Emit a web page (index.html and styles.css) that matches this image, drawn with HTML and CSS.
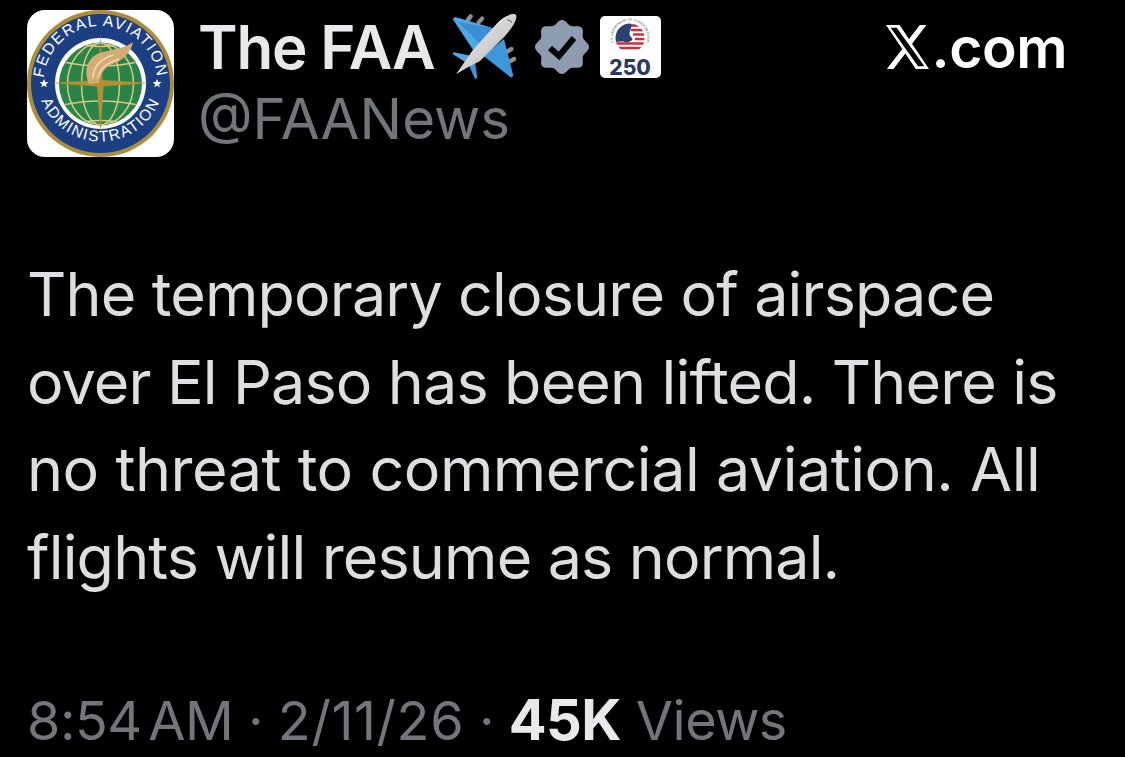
FILE: index.html
```html
<!DOCTYPE html>
<html lang="en">
<head>
<meta charset="utf-8">
<title>The FAA</title>
<link rel="stylesheet" href="styles.css">
</head>
<body>
<main class="post">
  <header class="head">
    <div class="avatar">
      <svg viewBox="0 0 147 147" width="147" height="147">
        <defs>
          <path id="arcTop" d="M18 86 A57 57 0 1 1 129 86"/>
          <path id="arcBot" d="M10 68 A63.5 63.5 0 0 0 137 68"/>
          <clipPath id="globe"><circle cx="73.5" cy="74" r="41"/></clipPath>
        </defs>
        <circle cx="73.5" cy="73.5" r="73.5" fill="#ad8c3a"/>
        <circle cx="73.5" cy="73.5" r="69.5" fill="#1b3f82"/>
        <circle cx="73.5" cy="73.5" r="45.5" fill="#fff"/>
        <circle cx="73.5" cy="74" r="41.5" fill="#2a8448"/>
        <g clip-path="url(#globe)" fill="none" stroke="#d5cc86" stroke-width="1.5">
          <ellipse cx="73.5" cy="74" rx="19" ry="41"/>
          <ellipse cx="73.5" cy="74" rx="33" ry="41"/>
          <path d="M32 51Q73.5 61 115 51M32 96Q73.5 86 115 96M40 31Q73.5 42 107 31M40 116Q73.5 105 107 116"/>
        </g>
        <path d="M73.5 23L75.5 70L123 73L76.5 76.5L73.5 124L70 76.5L24 73L71.5 70Z" fill="#b38f38"/>
        <path d="M62 74C56 60 60 46 76 42C88 39 98 38 106 32C104 43 95 51 86 54C77 57 73 65 72 73Z" fill="#d3ad72"/>
        <path d="M66 68C66 56 74 49 86 45M71 68C73 58 80 53 92 49" fill="none" stroke="#f0dcb8" stroke-width="1.5"/>
        <text class="seal-text"><textPath href="#arcTop" startOffset="50%" text-anchor="middle">FEDERAL AVIATION</textPath></text>
        <text class="seal-text"><textPath href="#arcBot" startOffset="50%" text-anchor="middle">ADMINISTRATION</textPath></text>
        <path d="M17 69l1.3 3 3.2.2-2.5 2 .9 3.1-2.9-1.7-2.7 1.7.8-3.1-2.5-2 3.2-.2zM130 69l1.3 3 3.2.2-2.5 2 .9 3.1-2.9-1.7-2.7 1.7.8-3.1-2.5-2 3.2-.2z" fill="#fff"/>
      </svg>
    </div>
    <div class="who">
      <div class="name-row">
        <span class="name">The FAA</span>
        <svg class="plane" viewBox="60 40 210 204" width="70" height="68">
          <defs>
            <linearGradient id="body" x1="0" y1="0" x2="1" y2="1">
              <stop offset="0" stop-color="#f4f4f4"/>
              <stop offset=".55" stop-color="#cfcfcf"/>
              <stop offset="1" stop-color="#8e8e8e"/>
            </linearGradient>
          </defs>
          <path d="M114 60L122 50M146 68L156 57M232 156L244 148M238 186L252 178" fill="none" stroke="#8f8f8a" stroke-width="13" stroke-linecap="round"/>
          <path d="M68 58L76 52L198 88L130 152Z" fill="#4fa8e6"/>
          <path d="M84 66L198 88L150 132Z" fill="#3a8ed2"/>
          <path d="M222 118L250 228L243 234L160 168Z" fill="#3d97da"/>
          <path d="M67 162L72 158L122 168L104 186Z" fill="#4fa8e6"/>
          <path d="M112 186L132 166L142 234L135 238Z" fill="#3d97da"/>
          <path d="M78 224L128 152L204 68C222 48 252 38 258 46C264 58 246 86 226 108L150 184L108 206Z" fill="url(#body)"/>
          <path d="M232 60q8 2 14 8" fill="none" stroke="#444" stroke-width="3"/>
        </svg>
        <svg class="badge" viewBox="0 0 54 54" width="54" height="54">
          <path d="M27 0C31 0 33 5 36 6C40 7 44 5 47 8C49 11 47 15 48 18C49 21 54 23 54 27C54 31 49 33 48 36C47 39 49 44 47 46C44 49 40 47 36 48C33 49 31 54 27 54C23 54 21 49 18 48C14 47 10 49 7 46C5 44 7 39 6 36C5 33 0 31 0 27C0 23 5 21 6 18C7 15 5 11 7 8C10 5 14 7 18 6C21 5 23 0 27 0Z" fill="#8e9cb0"/>
          <path d="M15 28L24 36L39 18" fill="none" stroke="#050505" stroke-width="6"/>
        </svg>
        <span class="seal250">
          <svg viewBox="0 0 40 40" width="40" height="40">
            <defs>
              <path id="ringTop" d="M5.5 29.5A17.3 17.3 0 1 1 34.5 29.5"/>
              <clipPath id="medal"><circle cx="20" cy="20" r="14.5"/></clipPath>
            </defs>
            <text class="ring-text"><textPath href="#ringTop" startOffset="50%" text-anchor="middle">U.S. DEPARTMENT OF TRANSPORTATION</textPath></text>
            <g clip-path="url(#medal)">
              <rect width="40" height="40" fill="#fff"/>
              <path d="M18 7.5h18M21 12h15M23 16.5h13M25 21h11M5 25.5h31M5 30h31" stroke="#c5303c" stroke-width="2.4"/>
              <path d="M4 24V4H20C25 9 16 14 21 19C25 22 19 25 15 24C11 23 8 24 4 24Z" fill="#2b4170"/>
            </g>
          </svg>
          <span class="num250">250</span>
        </span>
      </div>
      <div class="handle">@FAANews</div>
    </div>
    <div class="site">
      <svg viewBox="1.254 1.25 21.57 19.5" width="43" height="44" preserveAspectRatio="none"><path d="M18.244 1.25h3.308l-7.227 8.26 8.502 11.24H16.17l-5.214-6.817L4.99 20.75H1.68l7.73-8.835L1.254 1.25H8.08l4.713 6.231zm-.9 18.3h3.2L6.6 2.5H3.6z" fill="#fff" fill-rule="evenodd"/></svg>
      <span class="site-name">.com</span>
    </div>
  </header>
  <p class="body">The temporary closure of airspace<br>over El Paso has been lifted. There is<br><span class="wide">no threat to commercial aviation. All</span><br>flights will resume as normal.</p>
  <footer class="meta"><span class="time">8:54 AM</span> · <span class="date">2/11/26</span> · <b>45K</b> Views</footer>
</main>
</body>
</html>
```
FILE: styles.css
```css
* { box-sizing: border-box; }
html, body { margin: 0; height: 757px; overflow: hidden; background: #000; }
body { font-family: Inter, "Liberation Sans", sans-serif; }
.post { width: 1125px; height: 757px; padding: 10px 58px 0 27px; display: flex; flex-direction: column; }
.head { display: flex; align-items: flex-start; }
.avatar { width: 147px; height: 147px; background: #fff; border-radius: 18px; flex: none; overflow: hidden; }
.avatar svg { display: block; }
.seal-text { font-family: "Liberation Sans", sans-serif; font-size: 15.5px; letter-spacing: 1.5px; fill: #fff; }
.ring-text { font-family: "Liberation Sans", sans-serif; font-size: 3.2px; fill: #444; }
.who { margin-left: 24px; flex: 1; }
.name-row { display: flex; align-items: center; height: 73px; }
.name { font-size: 60px; font-weight: 600; color: #e7e9ea; letter-spacing: -1.2px; }
.plane { margin-left: 15px; flex: none; }
.badge { margin-left: 15px; flex: none; }
.seal250 { margin-left: 11px; width: 61px; height: 62px; background: #fff; border-radius: 5px; display: flex; flex-direction: column; align-items: center; padding-top: 2px; flex: none; }
.seal250 svg { display: block; flex: none; }
.num250 { font-size: 21px; font-weight: 800; color: #2b3a5c; line-height: 20px; }
.handle { font-size: 56.5px; color: #71767b; line-height: 60px; margin-top: 6px; }
.site { display: flex; align-items: center; gap: 3px; height: 74px; color: #fff; }
.site-name { font-size: 57px; font-weight: 600; letter-spacing: -0.5px; line-height: 1; }
.body { margin: 94px 0 0; font-size: 61px; line-height: 87.5px; color: #dcdee0; white-space: nowrap; letter-spacing: -0.85px; }
.wide { letter-spacing: -0.46px; }
.meta { margin-top: 84px; font-size: 54px; line-height: 70px; color: #71767b; white-space: nowrap; letter-spacing: -0.5px; }
.meta b { color: #e7e9ea; font-weight: 700; font-size: 56px; }
.time { word-spacing: -8px; }
.date { letter-spacing: 0.6px; }
```
